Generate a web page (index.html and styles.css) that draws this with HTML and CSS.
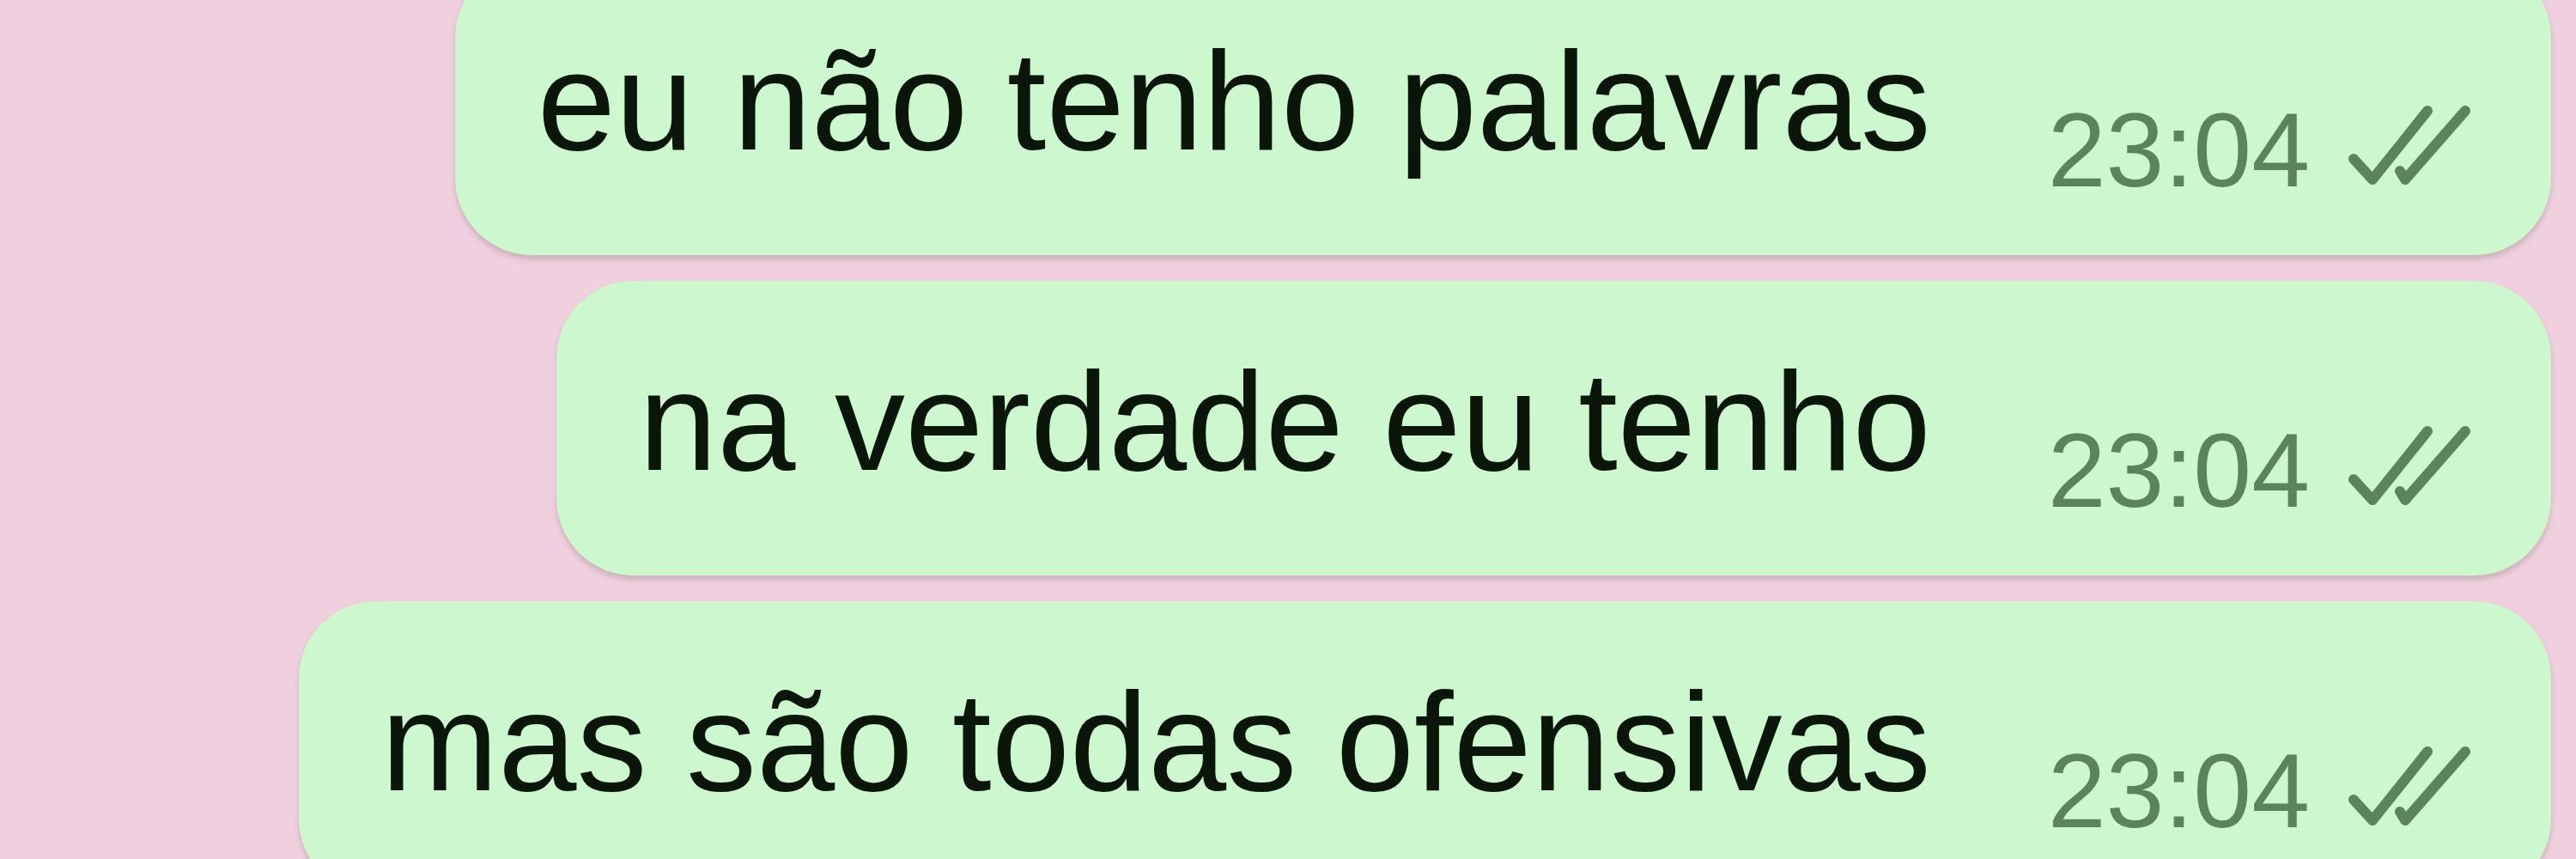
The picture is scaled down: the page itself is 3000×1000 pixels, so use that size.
FILE: index.html
```html
<!DOCTYPE html>
<html lang="pt">
<head>
  <meta charset="UTF-8" />
  <title>Conversa</title>
  <link rel="stylesheet" href="styles.css">
</head>
<body>

  <div class="chat">

    <!-- mensagem 1 -->
    <div class="msg">
      <span class="text">eu não tenho palavras</span>
      <span class="meta">23:04<svg class="ticks" viewBox="0 0 144 96"><path d="M8 64 L30 88 L94 8"/><path d="M62 78 L68 88 L138 8"/></svg></span>
    </div>

    <!-- mensagem 2 -->
    <div class="msg">
      <span class="text">na verdade eu tenho</span>
      <span class="meta">23:04<svg class="ticks" viewBox="0 0 144 96"><path d="M8 64 L30 88 L94 8"/><path d="M62 78 L68 88 L138 8"/></svg></span>
    </div>

    <!-- mensagem 3 -->
    <div class="msg">
      <span class="text">mas são todas ofensivas</span>
      <span class="meta">23:04<svg class="ticks" viewBox="0 0 144 96"><path d="M8 64 L30 88 L94 8"/><path d="M62 78 L68 88 L138 8"/></svg></span>
    </div>

  </div>

</body>
</html>
```

FILE: styles.css
```css
body {
  margin: 0;
  background: #f0d0df;
  font-family: 'Liberation Sans', Arial, sans-serif;
  overflow: hidden;
}

.chat {
  display: flex;
  flex-direction: column;
  align-items: flex-end;
  gap: 30px;
  margin-top: -46px;
  padding-right: 29px;
}

.msg {
  display: flex;
  align-items: flex-start;
  box-sizing: border-box;
  height: 343px;
  padding: 82px 94px 0 96px;
  background: #cdf7cc;
  border-radius: 90px;
  box-shadow: 0 5px 6px rgba(110, 100, 90, 0.28);
}

.text {
  font-size: 164px;
  line-height: 164px;
  color: #0b160b;
  white-space: nowrap;
}

.meta {
  margin: 78px 0 0 136px;
  font-size: 122px;
  line-height: 122px;
  color: #5b845b;
  white-space: nowrap;
}

.ticks {
  width: 144px;
  height: 96px;
  margin-left: 43px;
  fill: none;
  stroke: #5b845b;
  stroke-width: 12;
  stroke-linecap: round;
  stroke-linejoin: round;
}
```
